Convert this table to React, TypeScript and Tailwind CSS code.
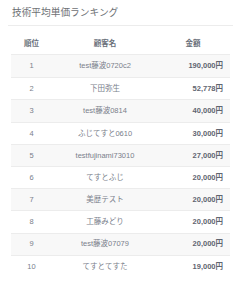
const rows = [
  { rank: 1, name: 'test藤波0720c2', amount: '190,000円' },
  { rank: 2, name: '下田弥生', amount: '52,778円' },
  { rank: 3, name: 'test藤波0814', amount: '40,000円' },
  { rank: 4, name: 'ふじてすと0610', amount: '30,000円' },
  { rank: 5, name: 'testfujinami73010', amount: '27,000円' },
  { rank: 6, name: 'てすとふじ', amount: '20,000円' },
  { rank: 7, name: '美歴テスト', amount: '20,000円' },
  { rank: 8, name: '工藤みどり', amount: '20,000円' },
  { rank: 9, name: 'test藤波07079', amount: '20,000円' },
  { rank: 10, name: 'てすとてすた', amount: '19,000円' },
];

export default function App() {
  return (
    <div
      className="w-[241px] h-[300px] bg-white overflow-hidden"
      style={{ fontFamily: '"Liberation Sans", "Noto Sans CJK JP", sans-serif' }}
    >
      <div className="px-[12px] pt-[4px] pb-[3px] text-[9.7px] leading-[18px] text-[#6e7175]">
        技術平均単価ランキング
      </div>
      <div className="mx-[8px] border-t border-[#ececec]" />

      <div className="mx-[11px] mt-[7px] text-[7.5px]">
        <div className="grid grid-cols-[41px_106px_70px] h-[22px] items-center font-bold text-[#6a707a] border-b border-[#ececec]">
          <span className="text-center">順位</span>
          <span className="text-center">顧客名</span>
          <span className="text-center">金額</span>
        </div>
        {rows.map((r, i) => (
          <div
            key={r.rank}
            className={`grid grid-cols-[41px_106px_70px] h-[22.2px] items-center text-[#7a808b] ${
              i > 0 ? 'border-t border-[#ececec]' : ''
            } ${i % 2 === 0 ? 'bg-[#f8f8f8]' : 'bg-white'}`}
          >
            <span className="text-center">{r.rank}</span>
            <span className="text-center whitespace-nowrap">{r.name}</span>
            <span className="text-right pr-[5px] font-bold text-[#5f6570]">{r.amount}</span>
          </div>
        ))}
      </div>
    </div>
  );
}
